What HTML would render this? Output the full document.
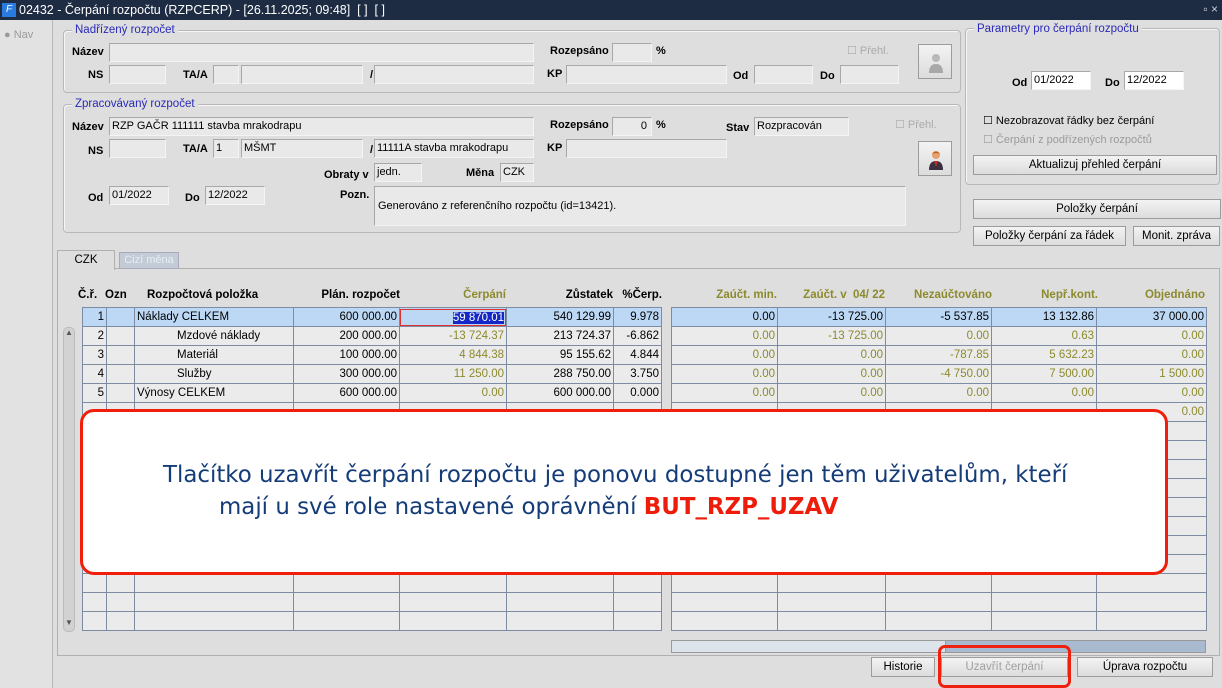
<!DOCTYPE html>
<html><head><meta charset="utf-8">
<style>
*{box-sizing:border-box;margin:0;padding:0}
body{width:1222px;height:688px;overflow:hidden;background:#dedede;font-family:"Liberation Sans",sans-serif;font-size:11.5px;color:#000;position:relative}
.a{position:absolute}
.tb{left:0;top:0;width:1222px;height:20px;background:#1d2b43;color:#fff;font-size:12.5px;line-height:20px;padding-left:19px}
.side{left:0;top:20px;width:53px;height:668px;background:#e2e2e2;border-right:1px solid #b9b9b9}
.fr{border:1px solid #b8b8b8;border-radius:4px;box-shadow:inset 1px 1px 0 #f6f6f6}
.lg{background:#dedede;color:#2a2ab8;font-size:11.5px;padding:0 3px;line-height:12px}
.l{font-weight:bold;font-size:11px;line-height:14px}
.f{background:#e9e9e9;border:1px solid #a8a8a8;border-right-color:#f4f4f4;border-bottom-color:#f4f4f4;height:19px;line-height:17px;padding-left:2px;font-size:11px;white-space:nowrap;overflow:hidden}
.w{background:#fff}
.btn{background:linear-gradient(#f3f3f3,#dcdcdc);border:1px solid #9c9c9c;text-align:center;line-height:18px;height:20px;font-size:11.5px}
table{border-collapse:collapse;position:absolute;table-layout:fixed}
td{border:1px solid #7d8ca3;height:19px;padding:0 2px;font-size:11.5px;line-height:17px;white-space:nowrap;overflow:hidden;background:#ebebeb;text-align:right;color:#8c8a2c}
tr.s td{background:#bcd8f5;color:#000}
td.k{color:#000}
td.t{text-align:left;color:#000}
td.i{text-align:left;color:#000;padding-left:42px}
.h{font-weight:bold;font-size:11.5px;top:289px;text-align:right}
.o{color:#8c8a2c}
.ic{position:absolute;left:9px;top:7px;width:16px;height:22px}
.ov{color:#143c78;font-family:'DejaVu Sans','Liberation Sans',sans-serif;font-size:22.9px;line-height:32px;white-space:nowrap}
</style></head><body>
<div class="a tb">02432 - Čerpání rozpočtu (RZPCERP) - [26.11.2025; 09:48]&nbsp; [ ]&nbsp; [ ]</div>
<div class="a" style="left:2px;top:3px;width:14px;height:14px;background:#2a7be0;color:#fff;font-size:10px;line-height:14px;text-align:center;font-style:italic">F</div>
<div class="a" style="right:4px;top:2px;color:#ccc;font-size:12px">▫ ×</div>
<div class="a side"></div>
<div class="a" style="left:4px;top:29px;color:#9a9a9a;font-size:11px">● Nav</div>

<div class="a fr" style="left:63px;top:30px;width:898px;height:63px"></div>
<div class="a lg" style="left:72px;top:24px">Nadřízený rozpočet</div>
<div class="a l" style="left:72px;top:45px">Název</div>
<div class="a f" style="left:109px;top:43px;width:425px"></div>
<div class="a l" style="left:550px;top:44px">Rozepsáno</div>
<div class="a f" style="left:612px;top:43px;width:40px"></div>
<div class="a l" style="left:656px;top:44px">%</div>
<div class="a" style="left:847px;top:44px;color:#aaa;font-size:11px">☐ Přehl.</div>
<div class="a btn" style="left:918px;top:44px;width:34px;height:35px"><svg class="ic" viewBox="0 0 16 22"><circle cx="8" cy="6" r="4" fill="#b8b8b8"/><path d="M1 21 Q1 12 8 12 Q15 12 15 21Z" fill="#a8a8a8"/></svg></div>
<div class="a l" style="left:88px;top:68px">NS</div>
<div class="a f" style="left:109px;top:65px;width:57px"></div>
<div class="a l" style="left:183px;top:68px">TA/A</div>
<div class="a f" style="left:213px;top:65px;width:26px"></div>
<div class="a f" style="left:241px;top:65px;width:122px"></div>
<div class="a l" style="left:370px;top:68px">/</div>
<div class="a f" style="left:374px;top:65px;width:160px"></div>
<div class="a l" style="left:547px;top:67px">KP</div>
<div class="a f" style="left:566px;top:65px;width:161px"></div>
<div class="a l" style="left:733px;top:69px">Od</div>
<div class="a f" style="left:754px;top:65px;width:59px"></div>
<div class="a l" style="left:820px;top:69px">Do</div>
<div class="a f" style="left:840px;top:65px;width:59px"></div>

<div class="a fr" style="left:63px;top:104px;width:898px;height:129px"></div>
<div class="a lg" style="left:72px;top:98px">Zpracovávaný rozpočet</div>
<div class="a l" style="left:72px;top:120px">Název</div>
<div class="a f" style="left:109px;top:117px;width:425px">RZP GAČR 111111 stavba mrakodrapu</div>
<div class="a l" style="left:550px;top:118px">Rozepsáno</div>
<div class="a f" style="left:612px;top:117px;width:40px;text-align:right;padding-right:4px">0</div>
<div class="a l" style="left:656px;top:118px">%</div>
<div class="a l" style="left:726px;top:121px">Stav</div>
<div class="a f" style="left:754px;top:117px;width:95px">Rozpracován</div>
<div class="a" style="left:895px;top:118px;color:#aaa;font-size:11px">☐ Přehl.</div>
<div class="a btn" style="left:918px;top:141px;width:34px;height:35px"><svg class="ic" viewBox="0 0 16 22"><path d="M1 21 Q1 12 8 12 Q15 12 15 21Z" fill="#3a3040"/><path d="M6 12 L8 18 L10 12Z" fill="#c03020"/><circle cx="8" cy="6" r="4" fill="#e8a070"/><path d="M4 5 Q8 0 12 5 Q8 3 4 5Z" fill="#c06010"/></svg></div>
<div class="a l" style="left:88px;top:144px">NS</div>
<div class="a f" style="left:109px;top:139px;width:57px"></div>
<div class="a l" style="left:183px;top:142px">TA/A</div>
<div class="a f" style="left:213px;top:139px;width:26px">1</div>
<div class="a f" style="left:241px;top:139px;width:122px">MŠMT</div>
<div class="a l" style="left:370px;top:143px">/</div>
<div class="a f" style="left:374px;top:139px;width:160px">11111A stavba mrakodrapu</div>
<div class="a l" style="left:547px;top:141px">KP</div>
<div class="a f" style="left:566px;top:139px;width:161px"></div>
<div class="a l" style="left:324px;top:168px">Obraty v</div>
<div class="a f" style="left:374px;top:163px;width:48px">jedn.</div>
<div class="a l" style="left:466px;top:166px">Měna</div>
<div class="a f" style="left:500px;top:163px;width:34px">CZK</div>
<div class="a l" style="left:88px;top:191px">Od</div>
<div class="a f" style="left:109px;top:186px;width:60px">01/2022</div>
<div class="a l" style="left:185px;top:191px">Do</div>
<div class="a f" style="left:205px;top:186px;width:60px">12/2022</div>
<div class="a l" style="left:340px;top:188px">Pozn.</div>
<div class="a f" style="left:374px;top:186px;width:532px;height:40px;line-height:38px;padding-left:3px">Generováno z referenčního rozpočtu (id=13421).</div>

<div class="a fr" style="left:965px;top:28px;width:255px;height:157px"></div>
<div class="a lg" style="left:974px;top:23px">Parametry pro čerpání rozpočtu</div>
<div class="a l" style="left:1012px;top:76px">Od</div>
<div class="a f w" style="left:1031px;top:71px;width:60px">01/2022</div>
<div class="a l" style="left:1105px;top:76px">Do</div>
<div class="a f w" style="left:1124px;top:71px;width:60px">12/2022</div>
<div class="a" style="left:983px;top:114px;font-size:11px">☐ Nezobrazovat řádky bez čerpání</div>
<div class="a" style="left:983px;top:133px;color:#9a9a9a;font-size:11px">☐ Čerpání z podřízených rozpočtů</div>
<div class="a btn" style="left:973px;top:155px;width:244px">Aktualizuj přehled čerpání</div>
<div class="a btn" style="left:973px;top:199px;width:248px">Položky čerpání</div>
<div class="a btn" style="left:973px;top:226px;width:153px">Položky čerpání za řádek</div>
<div class="a btn" style="left:1133px;top:226px;width:87px">Monit. zpráva</div>

<div class="a" style="left:57px;top:268px;width:1163px;height:388px;border:1px solid #b0b0b0;background:#dedede"></div>
<div class="a" style="left:57px;top:250px;width:58px;height:20px;background:#dedede;border:1px solid #b0b0b0;border-bottom:none;text-align:center;line-height:18px">CZK</div>
<div class="a" style="left:119px;top:252px;width:60px;height:17px;background:#c3cbd6;border:1px solid #aab;color:#e8eef5;text-align:center;line-height:15px;font-size:11px">Cizí měna</div>

<div class="a h" style="left:78px;width:30px;text-align:left">Č.ř.</div>
<div class="a h" style="left:105px;width:30px;text-align:left">Ozn</div>
<div class="a h" style="left:147px;width:130px;text-align:left">Rozpočtová položka</div>
<div class="a h" style="left:294px;width:106px">Plán. rozpočet</div>
<div class="a h o" style="left:400px;width:106px">Čerpání</div>
<div class="a h" style="left:507px;width:106px">Zůstatek</div>
<div class="a h" style="left:614px;width:48px">%Čerp.</div>
<div class="a h o" style="left:671px;width:106px">Zaúčt. min.</div>
<div class="a h o" style="left:777px;width:108px">Zaúčt. v&nbsp; 04/ 22</div>
<div class="a h o" style="left:886px;width:106px">Nezaúčtováno</div>
<div class="a h o" style="left:992px;width:106px">Nepř.kont.</div>
<div class="a h o" style="left:1097px;width:108px">Objednáno</div>

<table style="left:82px;top:307px;width:579px">
<colgroup><col style="width:24px"><col style="width:28px"><col style="width:159px"><col style="width:106px"><col style="width:107px"><col style="width:107px"><col style="width:48px"></colgroup>
<tr class="s"><td>1</td><td></td><td class="t">Náklady CELKEM</td><td>600 000.00</td><td style="padding:0"><div style="border:1px solid #e03030;height:17px;text-align:right;padding-right:1px"><span style="background:#1428c8;color:#fff">59 870.01</span></div></td><td>540 129.99</td><td>9.978</td></tr>
<tr><td class="k">2</td><td></td><td class="i">Mzdové náklady</td><td class="k">200 000.00</td><td>-13 724.37</td><td class="k">213 724.37</td><td class="k">-6.862</td></tr>
<tr><td class="k">3</td><td></td><td class="i">Materiál</td><td class="k">100 000.00</td><td>4 844.38</td><td class="k">95 155.62</td><td class="k">4.844</td></tr>
<tr><td class="k">4</td><td></td><td class="i">Služby</td><td class="k">300 000.00</td><td>11 250.00</td><td class="k">288 750.00</td><td class="k">3.750</td></tr>
<tr><td class="k">5</td><td></td><td class="t">Výnosy CELKEM</td><td class="k">600 000.00</td><td>0.00</td><td class="k">600 000.00</td><td class="k">0.000</td></tr>
<tr><td></td><td></td><td></td><td></td><td></td><td></td><td></td></tr>
<tr><td></td><td></td><td></td><td></td><td></td><td></td><td></td></tr>
<tr><td></td><td></td><td></td><td></td><td></td><td></td><td></td></tr>
<tr><td></td><td></td><td></td><td></td><td></td><td></td><td></td></tr>
<tr><td></td><td></td><td></td><td></td><td></td><td></td><td></td></tr>
<tr><td></td><td></td><td></td><td></td><td></td><td></td><td></td></tr>
<tr><td></td><td></td><td></td><td></td><td></td><td></td><td></td></tr>
<tr><td></td><td></td><td></td><td></td><td></td><td></td><td></td></tr>
<tr><td></td><td></td><td></td><td></td><td></td><td></td><td></td></tr>
<tr><td></td><td></td><td></td><td></td><td></td><td></td><td></td></tr>
<tr><td></td><td></td><td></td><td></td><td></td><td></td><td></td></tr>
<tr><td></td><td></td><td></td><td></td><td></td><td></td><td></td></tr>
</table>

<table style="left:671px;top:307px;width:535px">
<colgroup><col style="width:106px"><col style="width:108px"><col style="width:106px"><col style="width:105px"><col style="width:110px"></colgroup>
<tr class="s"><td>0.00</td><td>-13 725.00</td><td>-5 537.85</td><td>13 132.86</td><td>37 000.00</td></tr>
<tr><td>0.00</td><td>-13 725.00</td><td>0.00</td><td>0.63</td><td>0.00</td></tr>
<tr><td>0.00</td><td>0.00</td><td>-787.85</td><td>5 632.23</td><td>0.00</td></tr>
<tr><td>0.00</td><td>0.00</td><td>-4 750.00</td><td>7 500.00</td><td>1 500.00</td></tr>
<tr><td>0.00</td><td>0.00</td><td>0.00</td><td>0.00</td><td>0.00</td></tr>
<tr><td></td><td></td><td></td><td></td><td>0.00</td></tr>
<tr><td></td><td></td><td></td><td></td><td></td></tr>
<tr><td></td><td></td><td></td><td></td><td></td></tr>
<tr><td></td><td></td><td></td><td></td><td></td></tr>
<tr><td></td><td></td><td></td><td></td><td></td></tr>
<tr><td></td><td></td><td></td><td></td><td></td></tr>
<tr><td></td><td></td><td></td><td></td><td></td></tr>
<tr><td></td><td></td><td></td><td></td><td></td></tr>
<tr><td></td><td></td><td></td><td></td><td></td></tr>
<tr><td></td><td></td><td></td><td></td><td></td></tr>
<tr><td></td><td></td><td></td><td></td><td></td></tr>
<tr><td></td><td></td><td></td><td></td><td></td></tr>
</table>

<div class="a" style="left:63px;top:327px;width:12px;height:305px;background:#d2d2d2;border:1px solid #bbb;border-radius:5px"></div>
<div class="a" style="left:63px;top:327px;width:12px;height:12px;font-size:8px;text-align:center;color:#555;line-height:12px">▲</div>
<div class="a" style="left:63px;top:617px;width:12px;height:12px;font-size:8px;text-align:center;color:#555;line-height:12px">▼</div>
<div class="a" style="left:671px;top:640px;width:535px;height:13px;background:#a9b9cf;border:1px solid #999"></div>
<div class="a" style="left:671px;top:640px;width:275px;height:13px;background:#dde3ea;border:1px solid #999"></div>

<div class="a btn" style="left:871px;top:657px;width:64px">Historie</div>
<div class="a btn" style="left:941px;top:657px;width:127px;color:#a0a0a0">Uzavřít čerpání</div>
<div class="a btn" style="left:1077px;top:657px;width:136px">Úprava rozpočtu</div>
<div class="a" style="left:938px;top:645px;width:133px;height:43px;border:3px solid #ee2010;border-radius:7px"></div>

<div class="a" style="left:80px;top:409px;width:1088px;height:166px;background:#fff;border:3px solid #f01e0a;border-radius:14px"></div>
<div class="a ov" style="left:163px;top:459px">Tlačítko uzavřít čerpání rozpočtu je ponovu dostupné jen těm uživatelům, kteří</div>
<div class="a ov" style="left:219px;top:491px">mají u své role nastavené oprávnění <b style="color:#ee1c0a">BUT_RZP_UZAV</b></div>
</body></html>
